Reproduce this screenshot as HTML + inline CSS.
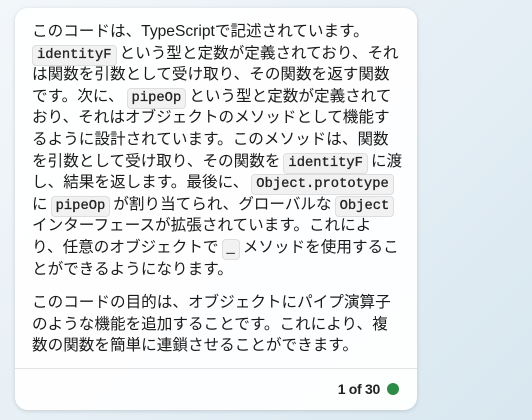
<!DOCTYPE html>
<html><head><meta charset="utf-8"><style>
html,body{margin:0;width:532px;height:420px;overflow:hidden}
body{background:linear-gradient(135deg,#f3f7fa 0%,#e6eff5 50%,#d8e7f0 100%);font-family:"Liberation Sans","Noto Sans CJK JP",sans-serif;}
.card{position:absolute;left:15px;top:8px;width:402px;height:402px;background:rgba(255,255,255,0.93);border-radius:13px;box-shadow:0 1px 4px rgba(0,0,0,0.15);}
.txt{position:absolute;left:17px;top:13px;width:380px;font-size:15.6px;color:#1a1a1a;white-space:nowrap}
.l{height:21.6px;line-height:21.6px}
code{font-family:"Liberation Mono",monospace;font-size:13.8px;background:#f2f2f2;border:1px solid #dedede;border-radius:4px;padding:0 4px;margin:0 3px;color:#222;line-height:19px;display:inline-block;vertical-align:0px;-webkit-text-stroke:0.3px #222}
.sep{position:absolute;left:0;right:0;top:360px;border-top:1px solid #e3e3e3}
.foot{position:absolute;right:18px;top:373px;font-size:14px;font-weight:bold;color:#222;display:flex;align-items:center;letter-spacing:-0.3px}
.dot{width:12px;height:12px;border-radius:50%;background:#2e8b47;margin-left:7px}
</style></head><body>
<div class="card">
<div class="txt">
<div class="l">このコードは、TypeScriptで記述されています。</div>
<div class="l"><code style="margin-left:0">identityF</code>という型と定数が定義されており、それ</div>
<div class="l">は関数を引数として受け取り、その関数を返す関数</div>
<div class="l">です。次に、<code>pipeOp</code>という型と定数が定義されて</div>
<div class="l">おり、それはオブジェクトのメソッドとして機能す</div>
<div class="l">るように設計されています。このメソッドは、関数</div>
<div class="l">を引数として受け取り、その関数を<code>identityF</code>に渡</div>
<div class="l">し、結果を返します。最後に、<code>Object.prototype</code></div>
<div class="l">に<code>pipeOp</code>が割り当てられ、グローバルな<code>Object</code></div>
<div class="l">インターフェースが拡張されています。これによ</div>
<div class="l">り、任意のオブジェクトで<code>_</code>メソッドを使用するこ</div>
<div class="l">とができるようになります。</div>
<div style="height:12px"></div>
<div class="l">このコードの目的は、オブジェクトにパイプ演算子</div>
<div class="l">のような機能を追加することです。これにより、複</div>
<div class="l">数の関数を簡単に連鎖させることができます。</div>
</div>
<div class="sep"></div>
<div class="foot">1 of 30<span class="dot"></span></div>
</div>
</body></html>
